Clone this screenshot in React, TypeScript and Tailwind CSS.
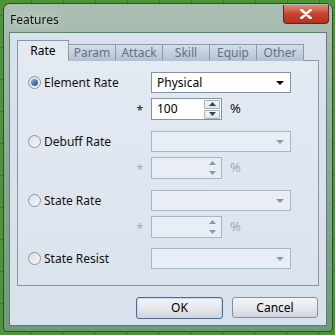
import { useState } from 'react'

type Row = {
  label: string
  enabled: boolean
  value?: string
  number?: boolean
  num?: string
}

const rows: Row[] = [
  { label: 'Element Rate', enabled: true, value: 'Physical', number: true, num: '100' },
  { label: 'Debuff Rate', enabled: false, number: true },
  { label: 'State Rate', enabled: false, number: true },
  { label: 'State Resist', enabled: false },
]

const tabs = ['Rate', 'Param', 'Attack', 'Skill', 'Equip', 'Other']

function Radio({ checked }: { checked: boolean }) {
  return (
    <span className="w-[13px] h-[13px] rounded-full border border-[#8b96a3] bg-gradient-to-br from-[#d9dee4] to-[#f7f8fa] flex items-center justify-center shrink-0">
      {checked && (
        <span className="w-[7px] h-[7px] rounded-full bg-gradient-to-br from-[#7fb6e8] to-[#1a4f8c]" />
      )}
    </span>
  )
}

function Caret({ enabled }: { enabled: boolean }) {
  return (
    <svg width="8" height="4" viewBox="0 0 8 4">
      <path d="M0 0 L8 0 L4 4 Z" fill={enabled ? '#000' : '#8d96a1'} />
    </svg>
  )
}

function Spinner({ enabled }: { enabled: boolean }) {
  const fill = enabled ? '#3b4148' : '#8d96a1'
  const box = enabled
    ? 'border border-[#a9b3bf] bg-gradient-to-b from-[#f4f5f7] to-[#dfe3e8]'
    : 'border border-transparent'
  return (
    <div className="flex flex-col gap-[1px] mr-[1px]">
      <div className={`w-[16px] h-[9px] flex items-center justify-center rounded-[1px] ${box}`}>
        <svg width="7" height="4" viewBox="0 0 7 4"><path d="M0 4 L7 4 L3.5 0 Z" fill={fill} /></svg>
      </div>
      <div className={`w-[16px] h-[9px] flex items-center justify-center rounded-[1px] ${box}`}>
        <svg width="7" height="4" viewBox="0 0 7 4"><path d="M0 0 L7 0 L3.5 4 Z" fill={fill} /></svg>
      </div>
    </div>
  )
}

export default function App() {
  const [active] = useState(0)

  return (
    <div className="w-[335px] h-[335px] overflow-hidden bg-[#4e9436] bg-[repeating-linear-gradient(90deg,transparent_0_31px,#3c7a2a_31px_32px),repeating-linear-gradient(0deg,transparent_0_31px,#3c7a2a_31px_32px)] pt-[3px] pl-[3px] font-['Noto_Sans',sans-serif] text-[12px]">
      {/* window frame */}
      <div className="w-[330px] h-[329px] rounded-t-[7px] rounded-b-[4px] border border-[#2d4a3a] bg-gradient-to-b from-[#aabfb2] via-[#8aa996] to-[#6b9a7a] flex flex-col">
        {/* title bar */}
        <div className="h-[28px] flex items-start relative">
          <span className="ml-[6px] mt-[7px] text-[12px] text-[#111] drop-shadow-[0_0_6px_rgba(255,255,255,0.9)]">
            Features
          </span>
          <div className="ml-auto mr-[3px] mt-[1px] w-[46px] h-[19px] rounded-b-[4px] border border-[#5a2a22] border-t-0 bg-gradient-to-b from-[#e08a7c] via-[#c8412f] to-[#b3331f] flex items-center justify-center">
            <svg width="12" height="10" viewBox="0 0 12 10">
              <path d="M1 0.5 L11 9.5 M11 0.5 L1 9.5" stroke="#fff" strokeWidth="2.6" strokeLinecap="round" />
            </svg>
          </div>
        </div>

        {/* client area */}
        <div className="mx-[5px] h-[294px] border border-[#5f7f6d] bg-[#d8e1ec] flex flex-col pl-[7px] pt-[7px]">
          {/* tabs */}
          <div className="flex items-end h-[21px] relative z-10">
            {tabs.map((t, i) =>
              i === active ? (
                <div
                  key={t}
                  className="w-[52px] h-[21px] border border-b-0 border-[#8996a7] bg-[#e4eaf2] flex items-center justify-center text-[#000] text-[12px]"
                >
                  {t}
                </div>
              ) : (
                <div
                  key={t}
                  className="w-[48px] h-[17px] -ml-[1px] border border-b-0 border-[#8d9aab] bg-gradient-to-b from-[#d5dee8] to-[#b1c1d2] flex items-center justify-center text-[#66717e] text-[12px]"
                >
                  {t}
                </div>
              )
            )}
          </div>
          <div className="-mt-[1px] w-[302px] h-[226px] border border-[#8996a7] bg-gradient-to-b from-[#e4eaf2] to-[#dbe3ed] flex flex-col pl-[10px] pt-[11px]">
            {rows.map((r, i) => (
              <div key={r.label} className={i === 0 ? '' : i === 3 ? 'mt-[10px]' : 'mt-[11px]'}>
                <div className="flex items-center h-[21px]">
                  <div className="w-[123px] flex items-center gap-[3px]">
                    <Radio checked={r.enabled} />
                    <span className="text-[#111]">{r.label}</span>
                  </div>
                  <div
                    className={`w-[140px] h-[21px] border flex items-center pl-[5px] pr-[6px] ${
                      r.enabled ? 'border-[#8592a3] bg-white' : 'border-[#aab6c6] bg-[#e9eef6]'
                    }`}
                  >
                    <span className="text-[#000]">{r.value}</span>
                    <span className="ml-auto flex">
                      <Caret enabled={r.enabled} />
                    </span>
                  </div>
                </div>
                {r.number && (
                  <div className="flex items-center h-[22px] mt-[5px]">
                    <div className={`w-[123px] flex justify-end pr-[8px] ${r.enabled ? 'text-[#222]' : 'text-[#a3abb5]'}`}>
                      <span className="text-[12px] leading-none mt-[3px]">*</span>
                    </div>
                    <div
                      className={`w-[71px] h-[22px] border flex items-center pl-[5px] ${
                        r.enabled ? 'border-[#8592a3] bg-white' : 'border-[#aab6c6] bg-[#e9eef6]'
                      }`}
                    >
                      <span className="text-[#000]">{r.num}</span>
                      <span className="ml-auto flex">
                        <Spinner enabled={r.enabled} />
                      </span>
                    </div>
                    <span className={`ml-[8px] text-[13px] ${r.enabled ? 'text-[#111]' : 'text-[#a3abb5]'}`}>%</span>
                  </div>
                )}
              </div>
            ))}
          </div>

          {/* buttons */}
          <div className="flex justify-end gap-[9px] mt-[11px] pr-[8px]">
            <button className="w-[87px] h-[22px] rounded-[3px] border border-[#4f6d93] bg-gradient-to-b from-[#f3f4f6] via-[#e6e8ec] to-[#d0d5dc] shadow-[inset_0_0_0_1px_#c7d8ee] text-[12px] text-[#000]">
              OK
            </button>
            <button className="w-[86px] h-[21px] rounded-[3px] border border-[#8a9099] bg-gradient-to-b from-[#f3f4f6] via-[#e6e8ec] to-[#d0d5dc] text-[12px] text-[#000]">
              Cancel
            </button>
          </div>
        </div>
      </div>
    </div>
  )
}
